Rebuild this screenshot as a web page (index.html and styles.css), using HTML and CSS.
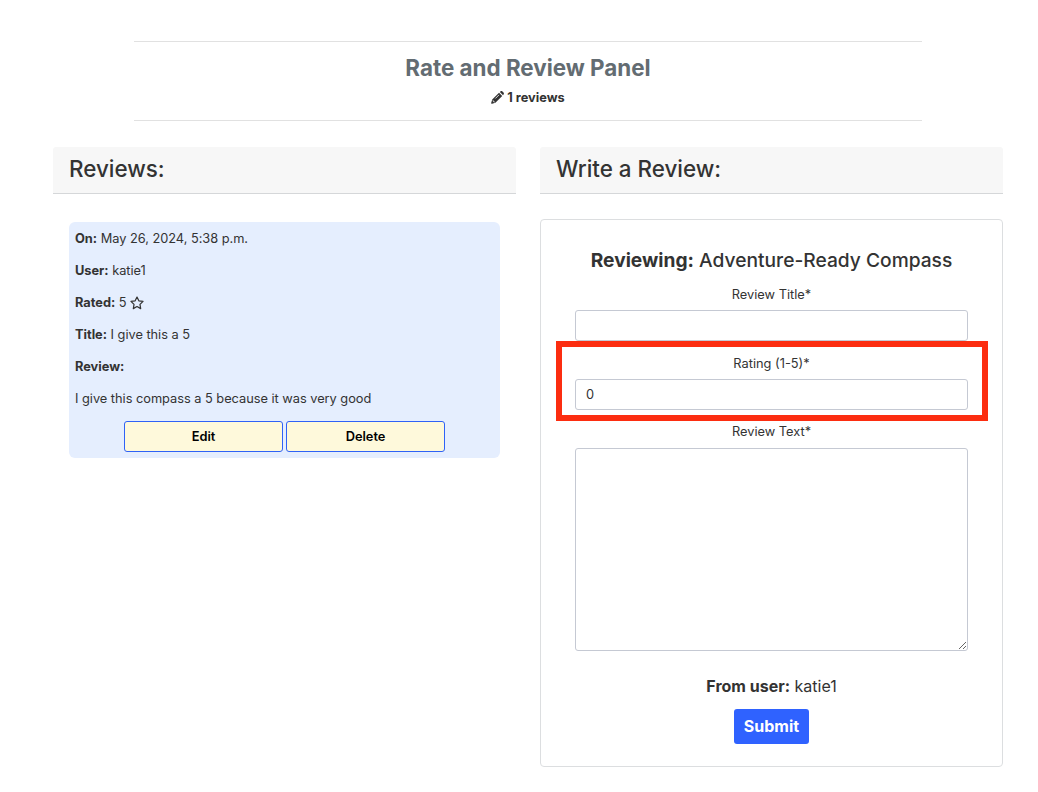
FILE: index.html
```html
<!DOCTYPE html>
<html lang="en">
<head>
<meta charset="utf-8">
<title>Rate and Review Panel</title>
<link rel="stylesheet" href="styles.css">
</head>
<body>
<header class="masthead">
  <h1 class="masthead-title">Rate and Review Panel</h1>
  <p class="masthead-count">
    <svg class="pencil" viewBox="0 0 16 16" aria-hidden="true"><path fill="currentColor" d="M9.9 2.2l3.9 3.9-8.4 8.4-4 1.2c-.8.2-1.3-.3-1.1-1.1l1.2-4zM10.9 1.2l.7-.6c.7-.7 1.8-.7 2.5 0l1.3 1.3c.7.7.7 1.8 0 2.5l-.6.7z"/><path stroke="#fff" stroke-width="1" fill="none" d="M5.4 9.2l4.4-4.4M2.5 11.4l.5 1.7 1.7.5"/></svg>
    1 reviews
  </p>
</header>
<main class="columns">
  <section class="column">
    <h2 class="column-head">Reviews:</h2>
    <article class="review">
      <p><strong>On:</strong> May 26, 2024, 5:38 p.m.</p>
      <p><strong>User:</strong> katie1</p>
      <p><strong>Rated:</strong> 5 <svg class="star" viewBox="0 0 16 16" aria-hidden="true"><path d="M8 1.2l2.1 4.3 4.8.7-3.5 3.4.8 4.8L8 12.1l-4.2 2.3.8-4.8L1.1 6.2l4.8-.7z" fill="none" stroke="currentColor" stroke-width="1.4" stroke-linejoin="round"/></svg></p>
      <p><strong>Title:</strong> I give this a 5</p>
      <p><strong>Review:</strong></p>
      <p>I give this compass a 5 because it was very good</p>
      <div class="actions">
        <button class="action" type="button">Edit</button>
        <button class="action" type="button">Delete</button>
      </div>
    </article>
  </section>
  <section class="column">
    <h2 class="column-head">Write a Review:</h2>
    <form class="card">
      <h3 class="card-title"><strong>Reviewing:</strong> Adventure-Ready Compass</h3>
      <div class="field">
        <label for="title">Review Title*</label>
        <input class="control" id="title" type="text">
      </div>
      <div class="field field-marked">
        <label for="rating">Rating (1-5)*</label>
        <input class="control" id="rating" type="text" value="0">
        <span class="marker"></span>
      </div>
      <div class="field field-text">
        <label for="text">Review Text*</label>
        <textarea class="control control-area" id="text"></textarea>
      </div>
      <p class="author"><strong>From user:</strong> katie1</p>
      <button class="submit" type="button">Submit</button>
    </form>
  </section>
</main>
</body>
</html>
```

FILE: styles.css
```css
* { box-sizing: border-box; }
body {
  margin: 0;
  padding: 41px 35px 0 53px;
  background: #fff;
  color: #333;
  font: 12.8px/20px Inter, sans-serif;
}
h1, h2, h3, p { margin: 0; }
strong { font-weight: 700; }
.masthead {
  width: 788px;
  height: 80px;
  margin: 0 0 26px 81px;
  padding-top: 11px;
  border-top: 1px solid #e1e1e1;
  border-bottom: 1px solid #e1e1e1;
  text-align: center;
}
.masthead-title {
  font-size: 22.4px;
  line-height: 30px;
  font-weight: 700;
  color: #636c72;
}
.masthead-count {
  display: flex;
  justify-content: center;
  align-items: center;
  gap: 3px;
  margin-top: 5px;
  font-weight: 700;
}
.pencil { width: 13px; height: 13px; margin-top: -1px; }
.columns {
  display: grid;
  grid-template-columns: 463px 463px;
  column-gap: 24px;
  align-items: start;
}
.column-head {
  height: 47px;
  padding: 0 16px;
  background: #f7f7f7;
  border-bottom: 1px solid #d5d7d9;
  border-radius: 3px 3px 0 0;
  font-size: 22.4px;
  line-height: 44px;
  font-weight: 500;
}
.review {
  height: 236px;
  margin: 28px 16px 0;
  padding: 7px 6px 0;
  background: #e5eefe;
  border-radius: 6px;
}
.review p { height: 32px; letter-spacing: -0.02px; }
.star { width: 14px; height: 14px; vertical-align: -3px; }
.actions {
  display: flex;
  justify-content: center;
  gap: 3px;
}
.action {
  width: 159px;
  height: 31px;
  padding: 0;
  border: 1px solid #2f62f6;
  border-radius: 3px;
  background: #fef9db;
  color: #000;
  font: 600 12.8px/20px Inter, sans-serif;
}
.card {
  height: 548px;
  margin-top: 25px;
  padding: 26px 34px 0;
  border: 1px solid #dcdee0;
  border-radius: 4px;
  text-align: center;
}
.card-title {
  height: 39px;
  font-size: 19.2px;
  line-height: 28px;
  font-weight: 500;
}
.field { height: 69px; }
.field label { display: block; height: 25px; }
.field-marked { position: relative; height: 68px; }
.control {
  display: block;
  width: 393px;
  height: 31px;
  margin: 0;
  padding: 4px 10px;
  border: 1px solid #c5c9d3;
  border-radius: 3px;
  background: #fff;
  color: #333;
  font: 12.8px/20px Inter, sans-serif;
}
.control-area { height: 203px; resize: vertical; }
.marker {
  position: absolute;
  top: -13px;
  left: -19px;
  width: 432px;
  height: 80px;
  border: 6px solid #fc2d10;
  pointer-events: none;
}
.field-text { height: 229px; }
.field-text label { height: 26px; }
.author {
  height: 35px;
  margin-top: 23px;
  font-size: 16px;
  line-height: 24px;
}
.submit {
  width: 75px;
  height: 35px;
  padding: 0 0 1px;
  border: 0;
  border-radius: 3px;
  background: #2f62ff;
  color: #fff;
  font: 700 16px/24px Inter, sans-serif;
}
```
